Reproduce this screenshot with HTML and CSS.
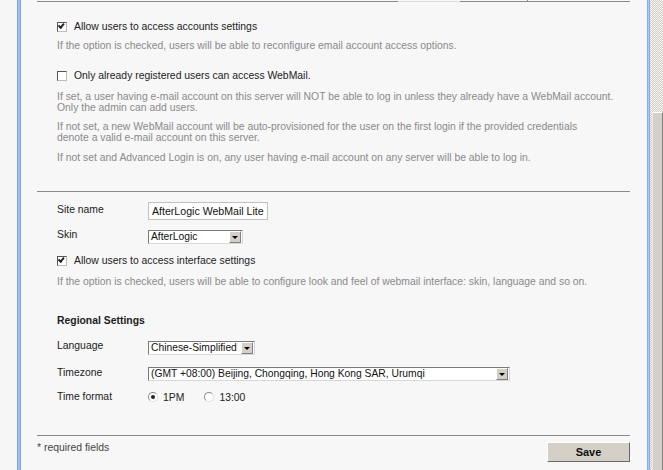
FILE: index.html
```html
<!DOCTYPE html>
<html>
<head>
<meta charset="utf-8">
<link rel="stylesheet" href="styles.css">
</head>
<body>
<div class="page">
  <div class="gutter"></div>
  <div class="bar bar-left"></div>
  <div class="content">
    <div class="topline">
      <span class="seg seg-a"></span><span class="seg seg-tab"></span><span class="seg seg-b"></span><span class="tick"></span><span class="seg seg-c"></span>
    </div>

    <div class="check-row r1"><span class="cb checked"></span><span>Allow users to access accounts settings</span></div>
    <p class="desc d1">If the option is checked, users will be able to reconfigure email account access options.</p>

    <div class="check-row r2"><span class="cb"></span><span>Only already registered users can access WebMail.</span></div>
    <p class="desc d2">If set, a user having e-mail account on this server will NOT be able to log in unless they already have a WebMail account.<br>Only the admin can add users.</p>
    <p class="desc d3">If not set, a new WebMail account will be auto-provisioned for the user on the first login if the provided credentials<br>denote a valid e-mail account on this server.</p>
    <p class="desc d4">If not set and Advanced Login is on, any user having e-mail account on any server will be able to log in.</p>

    <div class="sep sep1"></div>

    <div class="form-row fr-site"><span class="lbl">Site name</span><span class="textbox">AfterLogic WebMail Lite</span></div>
    <div class="form-row fr-skin"><span class="lbl">Skin</span><span class="select w-skin"><span class="sel-text">AfterLogic</span><span class="sel-btn"></span></span></div>
    <div class="check-row r3"><span class="cb checked"></span><span>Allow users to access interface settings</span></div>
    <p class="desc d5">If the option is checked, users will be able to configure look and feel of webmail interface: skin, language and so on.</p>

    <h3 class="section-title">Regional Settings</h3>
    <div class="form-row fr-lang"><span class="lbl">Language</span><span class="select w-lang"><span class="sel-text">Chinese-Simplified</span><span class="sel-btn"></span></span></div>
    <div class="form-row fr-tz"><span class="lbl">Timezone</span><span class="select w-tz"><span class="sel-text">(GMT +08:00) Beijing, Chongqing, Hong Kong SAR, Urumqi</span><span class="sel-btn"></span></span></div>
    <div class="form-row fr-time"><span class="lbl">Time format</span>
      <span class="radio on"></span><span class="radio-lbl">1PM</span>
      <span class="radio"></span><span class="radio-lbl">13:00</span>
    </div>

    <div class="sep sep2"></div>
    <div class="footer"><span class="req">* required fields</span><span class="save">Save</span></div>
  </div>
  <div class="bar bar-right"></div>
  <div class="scroll"><div class="thumb"></div></div>
</div>
</body>
</html>
```

FILE: styles.css
```css
html, body {
  margin: 0;
  padding: 0;
}
body {
  background: #f7f7f7;
  font-family: "Liberation Sans", Arial, sans-serif;
  font-size: 10.4px;
  color: #222;
}
.page {
  display: flex;
  width: 663px;
  height: 470px;
  overflow: hidden;
  background: #f7f7f7;
}
.gutter {
  width: 17px;
  flex: none;
  background: #f6f6f6;
}
.bar {
  flex: none;
  background: linear-gradient(to right, #6a9ef2, #a9c9fb 50%, #6a9ef2);
}
.bar-left { width: 4px; }
.bar-right { width: 3px; }
.content {
  flex: 1;
  padding: 0 17px 0 16px;
  min-width: 0;
}
.topline {
  display: flex;
  height: 2px;
}
.seg { display: block; height: 1px; margin-top: 1px; background: #8a8a8a; }
.seg-a { width: 361px; }
.seg-tab { width: 62px; background: #dedede; }
.seg-b { width: 67px; }
.tick { display: block; width: 1px; height: 2px; background: #8a8a8a; }
.seg-c { flex: 1; }

.check-row {
  display: flex;
  align-items: center;
  height: 12px;
  line-height: 12px;
  padding-left: 20px;
  color: #222;
}
.cb {
  width: 10px;
  height: 10px;
  box-sizing: border-box;
  border: 1px solid #555;
  border-right-color: #bbb;
  border-bottom-color: #bbb;
  background: #fff;
  margin-right: 7px;
  position: relative;
  flex: none;
}
.cb.checked::after {
  content: "";
  position: absolute;
  left: 1px;
  top: 0px;
  width: 4px;
  height: 2px;
  border-left: 2px solid #222;
  border-bottom: 2px solid #222;
  transform: rotate(-50deg);
  transform-origin: 3px 3px;
}
.r1 { margin-top: 19px; }
.r2 { margin-top: 18px; }
.r3 { margin-top: 11px; }

.desc {
  margin: 0;
  padding-left: 20px;
  color: #8a8a8a;
  line-height: 11px;
}
.d1 { margin-top: 7px; line-height: 12px; }
.d2 { margin-top: 9px; }
.d3 { margin-top: 8px; }
.d4 { margin-top: 9px; }
.d5 { margin-top: 9px; line-height: 12px; }

.sep {
  height: 1px;
  background: #8a8a8a;
}
.sep1 { margin-top: 28px; }
.sep2 { margin-top: 32px; }

.form-row {
  display: flex;
  align-items: center;
  padding-left: 20px;
}
.lbl {
  width: 91px;
  flex: none;
  color: #222;
}
.fr-site { margin-top: 10px; height: 18px; }
.fr-site .lbl { margin-top: -4px; }
.fr-skin { margin-top: 10px; height: 14px; }
.fr-skin .lbl { margin-top: -6px; }
.textbox {
  width: 120px;
  height: 18px;
  box-sizing: border-box;
  border: 1px solid #c0c0c0;
  background: #fff;
  font-size: 10.6px;
  line-height: 16px;
  padding-left: 3px;
  color: #111;
  white-space: nowrap;
  overflow: hidden;
}
.select {
  display: flex;
  height: 14px;
  box-sizing: border-box;
  border: 1px solid #7a7a7a;
  border-right-color: #d8d8d8;
  border-bottom-color: #d8d8d8;
  background: #fff;
  color: #111;
}
.sel-text {
  flex: 1;
  line-height: 12px;
  padding-left: 2px;
  font-size: 10.3px;
  white-space: nowrap;
  overflow: hidden;
}
.sel-btn {
  width: 12px;
  flex: none;
  box-sizing: border-box;
  margin: 0 1px 0 0;
  background: #d4d0c8;
  border: 1px solid;
  border-color: #fff #808080 #808080 #fff;
  position: relative;
}
.sel-btn::after {
  content: "";
  position: absolute;
  left: 2px;
  top: 4px;
  border-left: 3px solid transparent;
  border-right: 3px solid transparent;
  border-top: 3px solid #000;
}
.w-skin { width: 95px; }
.w-lang { width: 107px; }
.w-tz { width: 362px; }

.section-title {
  margin: 27px 0 0 0;
  padding-left: 20px;
  font-size: 10.4px;
  font-weight: bold;
  line-height: 12px;
  color: #222;
}
.fr-lang { margin-top: 14px; height: 14px; }
.fr-lang .lbl { margin-top: -5px; }
.fr-tz { margin-top: 12px; height: 14px; }
.fr-tz .lbl { margin-top: -4px; }
.fr-time { margin-top: 10px; height: 12px; }
.fr-time .lbl { margin-top: -2px; }
.radio {
  width: 10px;
  height: 10px;
  box-sizing: border-box;
  border-radius: 50%;
  border: 1px solid #8a8a8a;
  border-right-color: #ddd;
  border-bottom-color: #ddd;
  background: #fff;
  position: relative;
  flex: none;
}
.radio.on::after {
  content: "";
  position: absolute;
  left: 2px;
  top: 2px;
  width: 4px;
  height: 4px;
  border-radius: 50%;
  background: #222;
}
.radio-lbl {
  margin-left: 5px;
  margin-right: 20px;
  color: #222;
}

.footer {
  display: flex;
  justify-content: space-between;
  align-items: flex-start;
  margin-top: 6px;
}
.req {
  color: #444;
  margin-top: 0;
  line-height: 12px;
}
.save {
  width: 83px;
  height: 20px;
  box-sizing: border-box;
  border: 1px solid;
  border-color: #fff #6a6a6a #6a6a6a #fff;
  background: #d4d0c8;
  font-weight: bold;
  font-size: 11px;
  line-height: 18px;
  text-align: center;
  color: #111;
}

.scroll {
  width: 13px;
  flex: none;
  background: repeating-conic-gradient(#d4d0c8 0 25%, #f4f2ee 0 50%) 0 0 / 2px 2px;
  display: flex;
  flex-direction: column;
}
.thumb {
  margin-top: 112px;
  margin-left: 2px;
  flex: 1;
  background: #d4d0c8;
  border-top: 1px solid #fff;
  border-left: 1px solid #e8e6e0;
  border-right: 1px solid #808080;
}
```
